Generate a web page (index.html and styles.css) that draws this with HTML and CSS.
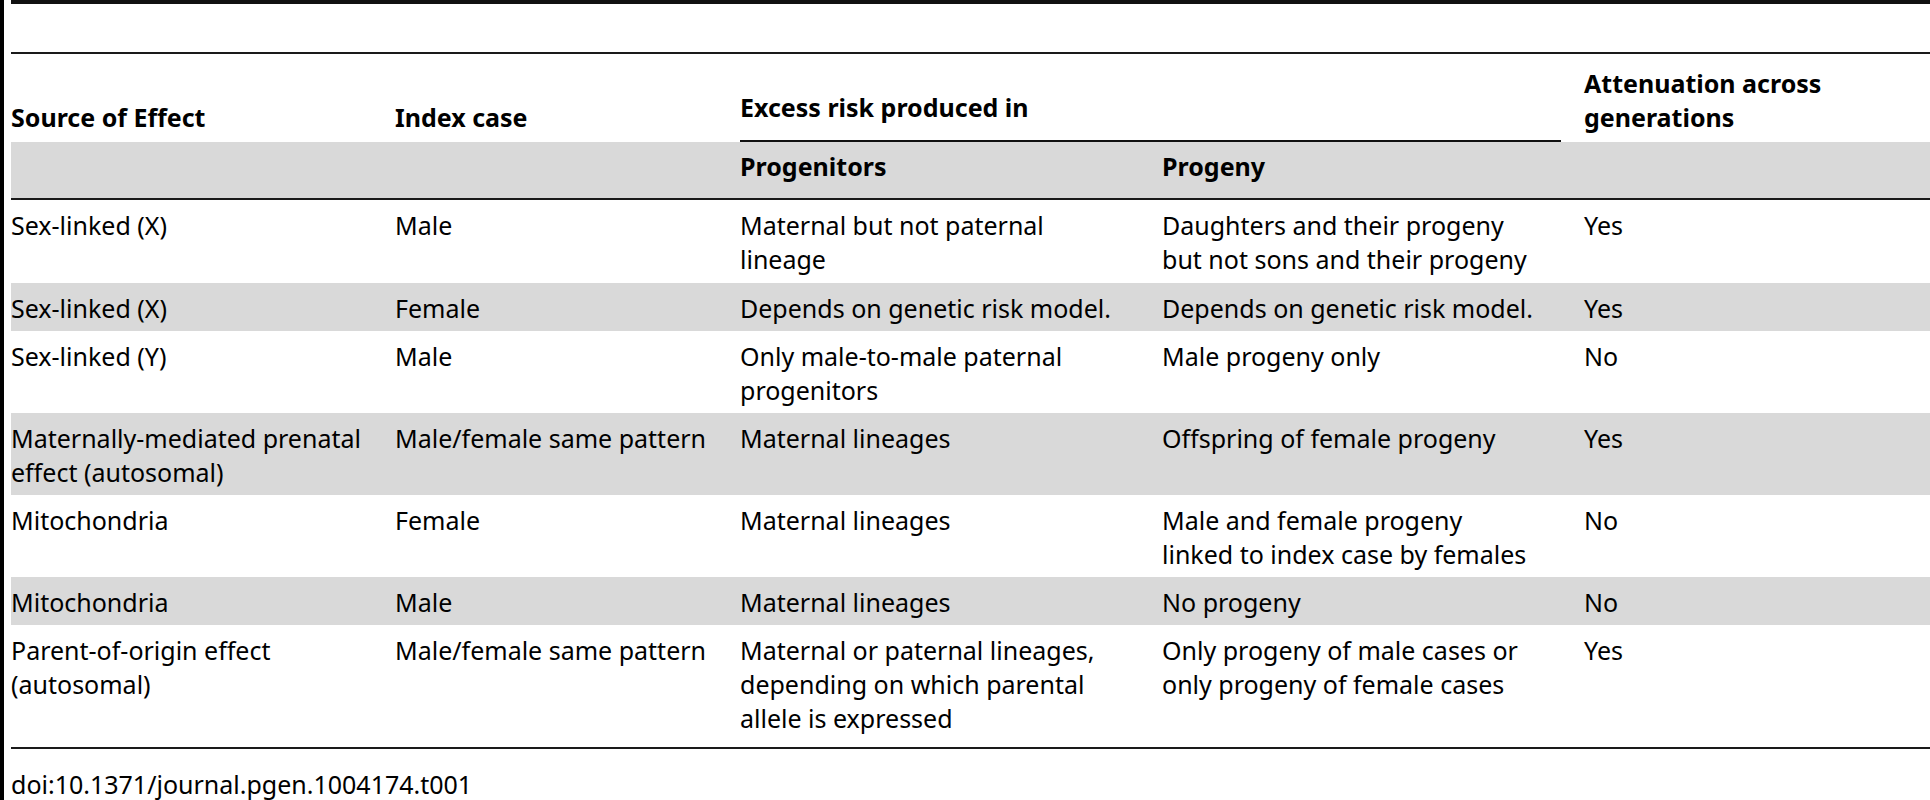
FILE: index.html
```html
<!DOCTYPE html>
<html lang="en">
<head>
<meta charset="utf-8">
<title>Table 1</title>
<link rel="stylesheet" href="styles.css">
</head>
<body>
<div class="page">
  <div class="top-rule"></div>
  <table class="risk-table">
    <colgroup>
      <col class="c-source">
      <col class="c-index">
      <col class="c-prog">
      <col class="c-progeny">
      <col class="c-atten">
    </colgroup>
    <thead>
      <tr class="head-main">
        <th>Source of Effect</th>
        <th>Index case</th>
        <th colspan="2" class="span-head"><span class="span-label">Excess risk produced in</span></th>
        <th>Attenuation across<br>generations</th>
      </tr>
      <tr class="head-sub">
        <th></th>
        <th></th>
        <th>Progenitors</th>
        <th>Progeny</th>
        <th></th>
      </tr>
    </thead>
    <tbody>
      <tr class="first">
        <td>Sex-linked (X)</td>
        <td>Male</td>
        <td>Maternal but not paternal<br>lineage</td>
        <td>Daughters and their progeny<br>but not sons and their progeny</td>
        <td>Yes</td>
      </tr>
      <tr class="shaded">
        <td>Sex-linked (X)</td>
        <td>Female</td>
        <td>Depends on genetic risk model.</td>
        <td>Depends on genetic risk model.</td>
        <td>Yes</td>
      </tr>
      <tr>
        <td>Sex-linked (Y)</td>
        <td>Male</td>
        <td>Only male-to-male paternal<br>progenitors</td>
        <td>Male progeny only</td>
        <td>No</td>
      </tr>
      <tr class="shaded">
        <td>Maternally-mediated prenatal<br>effect (autosomal)</td>
        <td>Male/female same pattern</td>
        <td>Maternal lineages</td>
        <td>Offspring of female progeny</td>
        <td>Yes</td>
      </tr>
      <tr>
        <td>Mitochondria</td>
        <td>Female</td>
        <td>Maternal lineages</td>
        <td>Male and female progeny<br>linked to index case by females</td>
        <td>No</td>
      </tr>
      <tr class="shaded">
        <td>Mitochondria</td>
        <td>Male</td>
        <td>Maternal lineages</td>
        <td>No progeny</td>
        <td>No</td>
      </tr>
      <tr class="last">
        <td>Parent-of-origin effect<br>(autosomal)</td>
        <td>Male/female same pattern</td>
        <td>Maternal or paternal lineages,<br>depending on which parental<br>allele is expressed</td>
        <td>Only progeny of male cases or<br>only progeny of female cases</td>
        <td>Yes</td>
      </tr>
    </tbody>
  </table>
  <p class="doi">doi:10.1371/journal.pgen.1004174.t001</p>
</div>
</body>
</html>
```

FILE: styles.css
```css
html, body {
  margin: 0;
  padding: 0;
  background: #fff;
}

.page {
  box-sizing: border-box;
  height: 800px;
  border-left: 4px solid #000;
  padding-left: 7px;
  font-family: "Noto Sans", "Open Sans", sans-serif;
  font-stretch: condensed;
  font-size: 25px;
  line-height: 34px;
  color: #000;
  overflow: hidden;
}

.top-rule {
  box-sizing: border-box;
  height: 52px;
  border-top: 4px solid #111;
}

.risk-table {
  width: 1919px;
  table-layout: fixed;
  border-collapse: collapse;
  border-top: 2px solid #1a1a1a;
  border-bottom: 2px solid #1a1a1a;
}

.c-source { width: 384px; }
.c-index { width: 345px; }
.c-prog { width: 422px; }
.c-progeny { width: 422px; }
.c-atten { width: 346px; }

.risk-table th,
.risk-table td {
  padding: 8px 23px 6px 0;
  text-align: left;
  vertical-align: top;
  white-space: nowrap;
}

.risk-table th {
  font-weight: 700;
}

.head-main th {
  height: 89px;
  box-sizing: border-box;
  vertical-align: bottom;
  padding-bottom: 8px;
}

.head-main th.span-head {
  padding: 0 23px 0 0;
}

.span-label {
  display: block;
  border-bottom: 2px solid #111;
  padding-bottom: 16px;
}

.head-sub th {
  background: #d9d9d9;
  height: 56px;
  box-sizing: border-box;
  padding-top: 7px;
  padding-bottom: 15px;
  border-bottom: 2px solid #1a1a1a;
}

.shaded td {
  background: #d9d9d9;
}

.first td {
  padding-bottom: 7px;
}

.last td {
  padding-bottom: 12px;
}

.doi {
  margin: 18px 0 0;
}
```
